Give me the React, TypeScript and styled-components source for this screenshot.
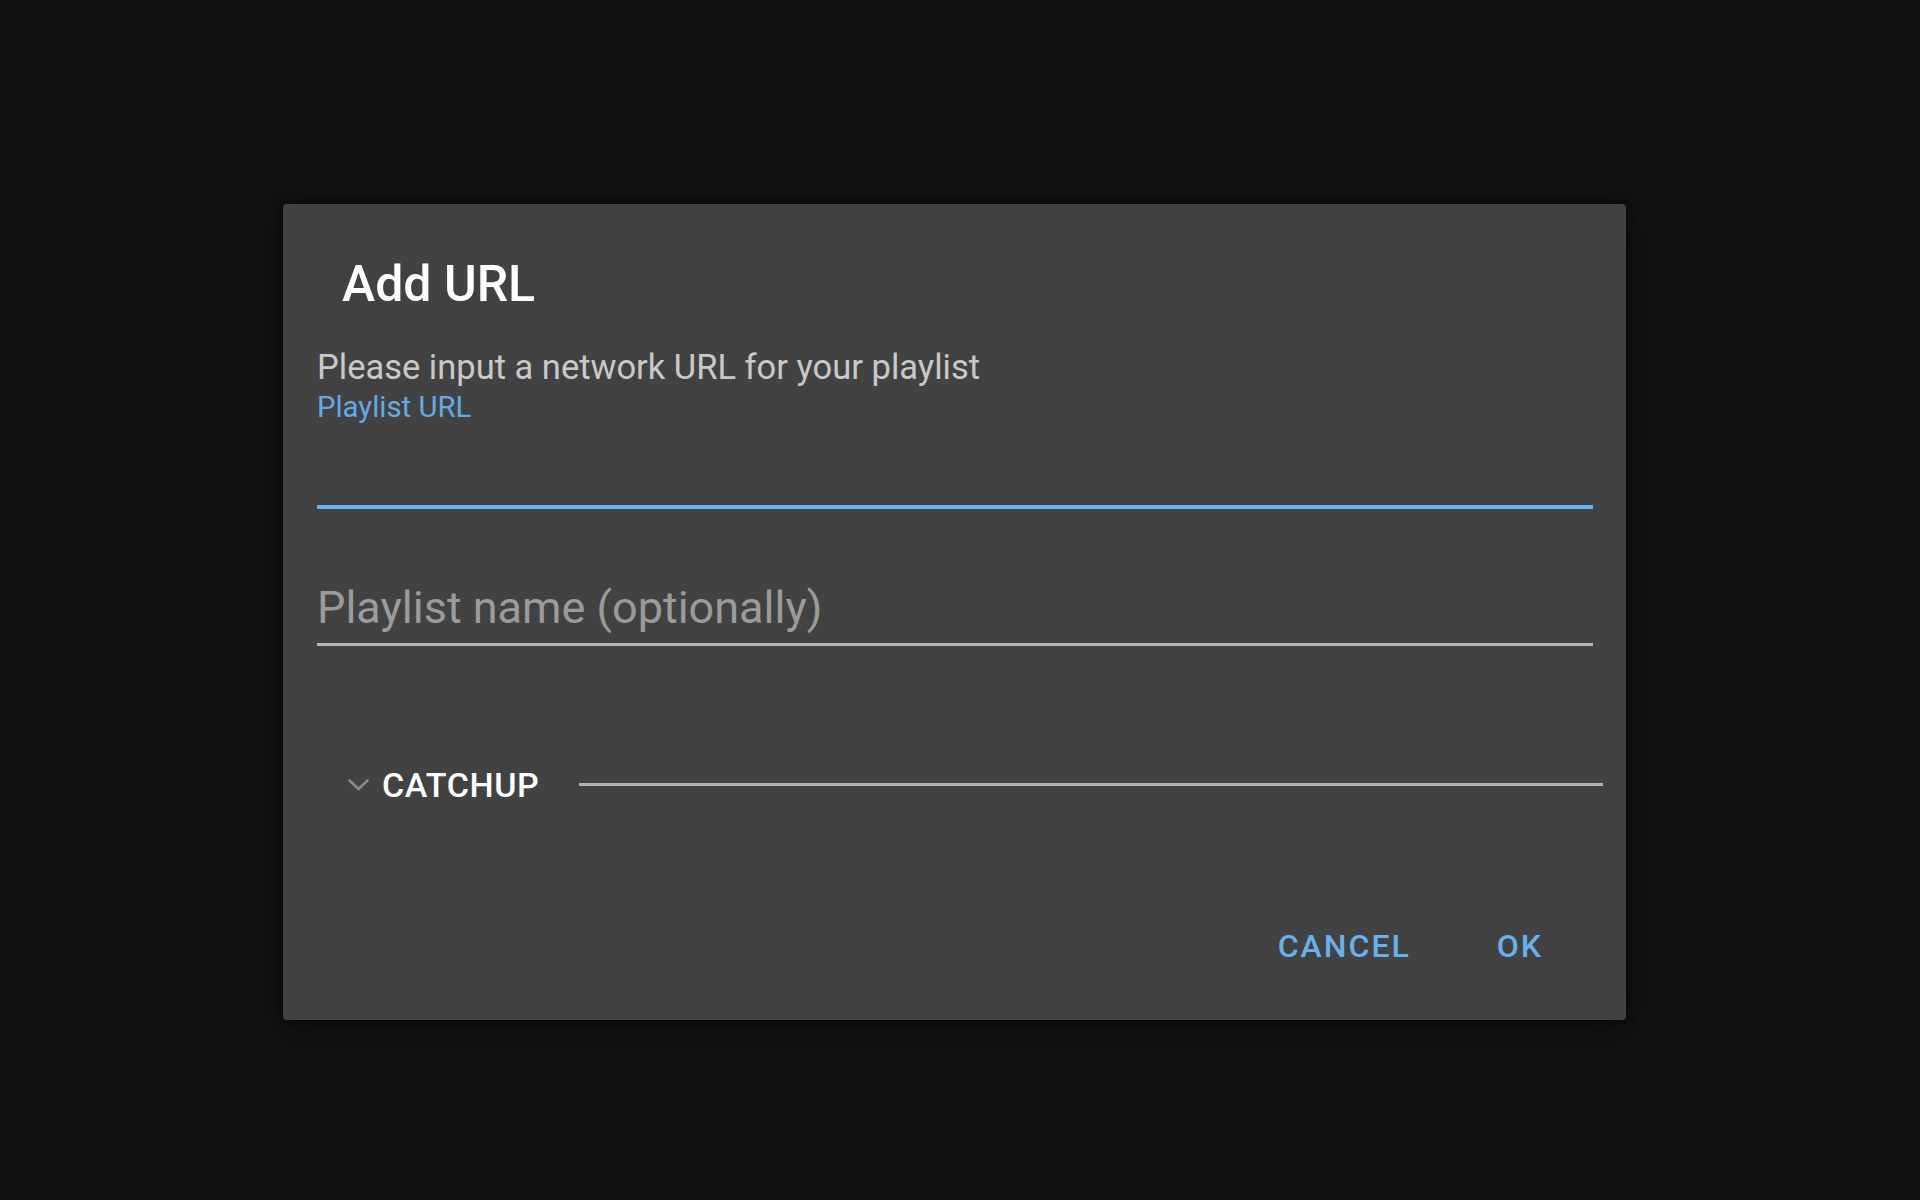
import React from "react";
import styled, { createGlobalStyle } from "styled-components";

const Global = createGlobalStyle`
  html, body {
    margin: 0;
    padding: 0;
    background: #121212;
  }
  body {
    font-family: Roboto, "Noto Sans", "Liberation Sans", sans-serif;
  }
`;

const Page = styled.div`
  width: 1920px;
  height: 1200px;
  box-sizing: border-box;
  padding: 204px 0 0 283px;
  background: #121212;
`;

const Dialog = styled.div`
  width: 1343px;
  box-sizing: border-box;
  background: #424242;
  border-radius: 4px;
  box-shadow: 0 0 6px 3px rgba(0, 0, 0, 0.35), 0 10px 40px rgba(0, 0, 0, 0.3);
  padding: 50px 0 54px 34px;
  display: flex;
  flex-direction: column;
`;

const Title = styled.h2`
  margin: 0 0 33px 25px;
  font-size: 50px;
  line-height: 60px;
  font-weight: 500;
  color: #ffffff;
`;

const Description = styled.p`
  margin: 0;
  font-size: 34.5px;
  line-height: 40px;
  color: #c9c9c9;
`;

const Field = styled.label<{ $gap: number }>`
  display: flex;
  flex-direction: column;
  margin: ${(p) => p.$gap}px 33px 0 0;
`;

const FieldLabel = styled.span`
  font-size: 29.3px;
  line-height: 36px;
  color: #62abe6;
`;

const TextInput = styled.input<{ $focused?: boolean; $h: number }>`
  display: block;
  width: 100%;
  box-sizing: border-box;
  height: ${(p) => p.$h + (p.$focused ? 4 : 3)}px;
  padding: 0 0 ${(p) => (p.$focused ? 2 : 9)}px 0;
  margin: 0;
  background: transparent;
  border: none;
  border-bottom: ${(p) => (p.$focused ? "4px solid #66b2f0" : "3px solid #b8b8b8")};
  outline: none;
  font-family: Roboto, "Noto Sans", "Liberation Sans", sans-serif;
  font-size: 45px;
  color: #ffffff;
  &::placeholder {
    color: #9b9b9b;
    opacity: 1;
  }
`;

const SectionRow = styled.div`
  display: flex;
  align-items: center;
  height: 40px;
  margin: 119px 23px 0 31px;
`;

const Chevron = styled.svg`
  width: 21px;
  height: 12px;
  flex: none;
  margin-right: 13px;
`;

const SectionTitle = styled.span`
  font-size: 34px;
  line-height: 40px;
  font-weight: 500;
  letter-spacing: 0.6px;
  color: #ffffff;
  margin-right: 40px;
`;

const Rule = styled.div`
  flex: 1;
  height: 3px;
  background: #b3b3b3;
  margin-top: -2px;
`;

const Actions = styled.div`
  display: flex;
  justify-content: flex-end;
  gap: 86px;
  margin-top: 121px;
  padding-right: 83px;
`;

const TextButton = styled.button`
  background: none;
  border: none;
  padding: 0;
  margin: 0;
  font-family: Roboto, "Noto Sans", "Liberation Sans", sans-serif;
  font-size: 32px;
  line-height: 40px;
  font-weight: 500;
  letter-spacing: 2px;
  color: #66b1ee;
  cursor: pointer;
`;

export default function App() {
  return (
    <>
      <Global />
      <Page>
        <Dialog role="dialog" aria-label="Add URL">
          <Title>Add URL</Title>
          <Description>Please input a network URL for your playlist</Description>
          <Field $gap={2}>
            <FieldLabel>Playlist URL</FieldLabel>
            <TextInput $focused $h={80} type="text" />
          </Field>
          <Field $gap={71}>
            <TextInput $h={63} type="text" placeholder="Playlist name (optionally)" />
          </Field>
          <SectionRow>
            <Chevron viewBox="0 0 21 12">
              <polyline
                points="1.5,1.5 10.5,10 19.5,1.5"
                fill="none"
                stroke="#8a8a8a"
                strokeWidth="2.6"
                strokeLinecap="round"
                strokeLinejoin="round"
              />
            </Chevron>
            <SectionTitle>CATCHUP</SectionTitle>
            <Rule />
          </SectionRow>
          <Actions>
            <TextButton>CANCEL</TextButton>
            <TextButton>OK</TextButton>
          </Actions>
        </Dialog>
      </Page>
    </>
  );
}
